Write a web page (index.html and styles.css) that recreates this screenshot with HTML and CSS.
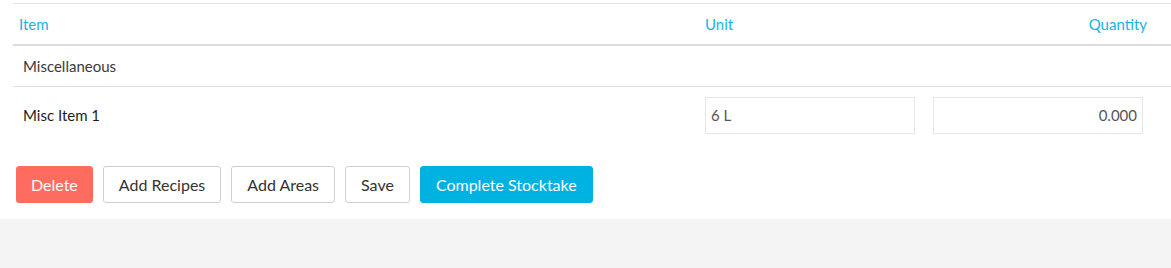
FILE: index.html
```html
<!DOCTYPE html>
<html>
<head>
<meta charset="utf-8">
<link rel="stylesheet" href="styles.css">
</head>
<body>
<div class="panel">
  <div class="table">
    <div class="row head">
      <div class="c-item">Item</div>
      <div class="c-unit">Unit</div>
      <div class="c-qty">Quantity</div>
    </div>
    <div class="row cat">
      <div class="c-item">Miscellaneous</div>
    </div>
    <div class="row line">
      <div class="c-item">Misc Item 1</div>
      <div class="c-unit"><input class="field" type="text" value="6 L"></div>
      <div class="c-qty"><input class="field num" type="text" value="0.000"></div>
    </div>
  </div>
  <div class="actions">
    <button class="btn danger">Delete</button>
    <button class="btn">Add Recipes</button>
    <button class="btn">Add Areas</button>
    <button class="btn">Save</button>
    <button class="btn primary">Complete Stocktake</button>
  </div>
</div>
</body>
</html>
```
FILE: styles.css
```css
html, body {
  margin: 0;
  padding: 0;
  background: #f4f4f4;
  font-family: Lato, "Liberation Sans", sans-serif;
  color: #333;
}
.panel {
  background: #fff;
  height: 219px;
  padding-top: 3px;
  box-sizing: border-box;
}
.table {
  margin-left: 13px;
  border-top: 1px solid #e2e2e2;
}
.row {
  display: flex;
  align-items: center;
}
.c-item { flex: 1; }
.c-unit { width: 228px; }
.c-qty { width: 238px; text-align: right; }
.head {
  height: 40px;
  border-bottom: 2px solid #dcdcdc;
  color: #19b3e3;
  font-size: 15px;
}
.head .c-item { padding-left: 6px; }
.head .c-unit { margin-left: 8px; }
.head .c-qty { padding-right: 24px; box-sizing: border-box; }
.cat {
  height: 40px;
  border-bottom: 1px solid #e0e0e0;
  font-size: 15px;
  color: #3a3a3a;
}
.cat .c-item { padding-left: 10px; }
.line {
  height: 56px;
  font-size: 15px;
  color: #1e1e1e;
}
.line .c-item { padding-left: 10px; }
.line .c-unit { margin-left: 10px; }
.line .c-qty { padding-right: 28px; box-sizing: border-box; }
.field {
  width: 210px;
  height: 37px;
  box-sizing: border-box;
  border: 1px solid #e6e6e6;
  border-radius: 0;
  padding: 0 5px;
  font-family: Lato, "Liberation Sans", sans-serif;
  font-size: 15px;
  color: #555;
  outline: none;
}
.field.num { text-align: right; }
.actions {
  display: flex;
  gap: 10px;
  margin-top: 23px;
  margin-left: 16px;
}
.btn {
  height: 37px;
  padding: 0 15px;
  border: 1px solid #cfcfcf;
  border-radius: 3px;
  background: #fff;
  font-family: Lato, "Liberation Sans", sans-serif;
  font-size: 16px;
  color: #333;
}
.btn.danger {
  padding: 0 14px;
  background: #fe6c5f;
  border-color: #fe6c5f;
  color: #fff;
}
.btn.primary {
  background: #00b2e2;
  border-color: #00b2e2;
  color: #fff;
}
```
